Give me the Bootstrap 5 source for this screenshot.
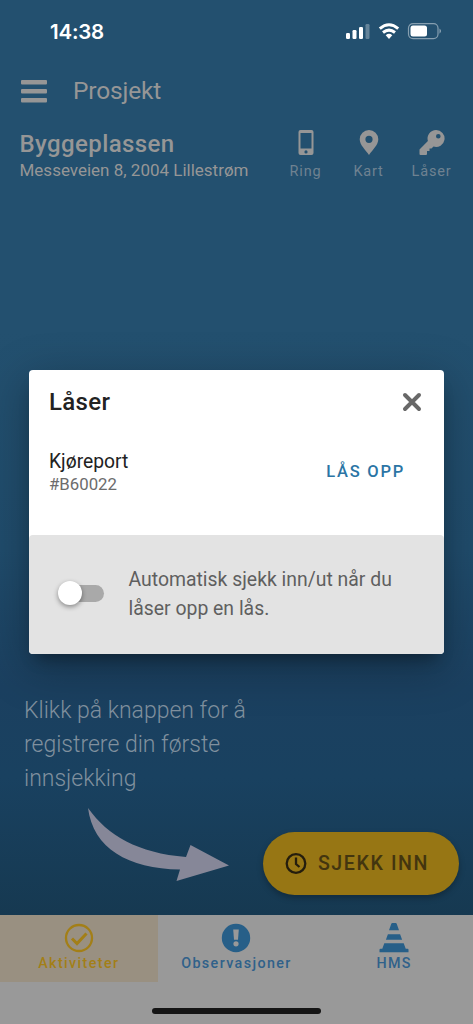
<!DOCTYPE html>
<html lang="no">
<head>
<meta charset="utf-8">
<meta name="viewport" content="width=device-width, initial-scale=1">
<title>Prosjekt</title>
<link href="https://cdn.jsdelivr.net/npm/bootstrap@5.3.0/dist/css/bootstrap.min.css" rel="stylesheet">
<style>
body{font-family:Roboto,sans-serif;background:#999;overflow:hidden}
.phone{width:473px;height:1024px}
.backdrop-page{background:linear-gradient(#23506f 0,#23506f 36%,#204c6c 60%,#1b4060 75%,#194160 85%,#163951 100%);height:915px;color:#969696}
.status{height:63px;padding:2px 32px 0 50px;color:#fff}
.clock{font:600 20.5px/1 Inter,sans-serif;letter-spacing:-.2px}
.titlebar{height:56px;padding-left:21px;gap:26px}
.titlebar span{font-size:24.5px;letter-spacing:-.15px;padding-top:1px}
.project{padding:11px 10px 0 19.5px;height:75px}
.project h1{font-size:24px;font-weight:500;line-height:28px;letter-spacing:.4px}
.project p{font-size:17px;line-height:25px;white-space:nowrap}
.quick{font-size:14.5px;letter-spacing:.8px;color:#6f8291;line-height:18px}
.quick>div{width:63px}
.quick svg{margin-bottom:6px}
.hint{font-size:23px;line-height:34px;font-weight:300;color:#80909e;margin:500px 0 0 24px;width:240px}
.action{height:106px}
.swoosh{margin:12px 0 0 86px}
.checkin{width:196px;height:63px;margin:36px 14px 0 0;background:#977614;color:#43350f;font-size:19.6px;font-weight:500;letter-spacing:1.6px;gap:11px;border:0;box-shadow:0 3px 6px #0004}
.tabs{height:67px;font-size:14.3px;font-weight:500;letter-spacing:1.4px;color:#30618a}
.tab-item{padding-top:8px;line-height:18px}
.tab-item.current{background:#999081;color:#a37f17}
.home{width:169px;height:6px;background:#151515;margin-top:26px}
.dialog{left:29px;top:370px;width:415px;height:284px;border-radius:4px;box-shadow:0 11px 15px -7px #0005,0 12px 45px 3px #0004}
.dialog-top{height:165px;padding:17px 22px 0 20px}
.dialog h2{font-size:24px;font-weight:500;line-height:30px;letter-spacing:.35px;color:#222}
.lockrow{margin-top:33px}
.lockname{font-size:19.3px;line-height:24px;color:#222}
.lockid{font-size:16.8px;line-height:21px;color:#6c6c6c}
.unlock{font-size:16.5px;font-weight:500;letter-spacing:1.75px;color:#2b75a5;padding-right:17px}
.auto{height:119px;background:#e3e3e3;border-radius:4px;padding:0 28px 2px;gap:24.5px;font-size:19.4px;line-height:29px;color:#5f5f5f}
.track{width:40px;height:17px;background:#a9a9a9;margin-left:7px}
.thumb{width:24px;height:24px;margin:-4px 0 0 -6px;background:#fff;box-shadow:0 2px 5px #0006}
</style>
</head>
<body>
<div class="phone position-relative d-flex flex-column">
<main class="backdrop-page flex-shrink-0">
<div class="status d-flex align-items-center justify-content-between">
<span class="clock">14:38</span>
<span class="d-flex align-items-center pb-1">
<svg width="96" height="18" viewBox="0 0 96 18" fill="#fff"><rect x="1" y="11" width="4" height="6" rx="1.2"/><rect x="7.500" y="8" width="4" height="9" rx="1.2"/><rect x="14" y="5" width="4" height="12" rx="1.2"/><rect x="20.500" y="2" width="4" height="15" rx="1.2" opacity=".3"/>
<g fill="none" stroke="#fff" stroke-width="3"><path d="M34.800 6.600Q44 -1.100 53.200 6.600"/><path d="M38 10.500Q44 5.700 50 10.500"/></g><path d="M40.700 13.200Q44 10.500 47.300 13.200L44 17Z"/>
<rect x="63.500" y="1.600" width="29.500" height="15" rx="4.500" fill="none" stroke="#fff" stroke-opacity=".45" stroke-width="1.200"/><rect x="65.500" y="3.600" width="16.500" height="11" rx="2.500"/><path d="M94.500 6.500q3 2.600 0 5.200z" opacity=".5"/></svg>
</span>
</div>
<div class="titlebar d-flex align-items-center">
<svg width="26" height="23" viewBox="0 0 26 23" fill="#969696"><rect width="26" height="4.500" rx="1"/><rect y="9" width="26" height="4.500" rx="1"/><rect y="18" width="26" height="4.500" rx="1"/></svg>
<span>Prosjekt</span>
</div>
<div class="project d-flex justify-content-between">
<div><h1 class="m-0">Byggeplassen</h1><p class="m-0">Messeveien 8, 2004 Lillestrøm</p></div>
<div class="quick d-flex text-center">
<div class="d-flex flex-column align-items-center"><svg width="30" height="27" viewBox="0 0 30 27" fill="#969696"><path fill-rule="evenodd" d="M9.500 0h11q2 0 2 2v21q0 2-2 2h-11q-2 0-2-2V2q0-2 2-2zM9.500 3v15.500h11V3zM15 20.300a1.600 1.600 0 1 0 0 3.200a1.600 1.600 0 1 0 0-3.200"/></svg><span>Ring</span></div>
<div class="d-flex flex-column align-items-center"><svg width="30" height="27" viewBox="0 0 30 27" fill="#969696"><path fill-rule="evenodd" d="M15 0a9.300 9.300 0 0 1 9.300 9.300C24.300 15 18.500 20 15 25C11.500 20 5.700 15 5.700 9.300A9.300 9.300 0 0 1 15 0zM15 5.700a3.600 3.600 0 1 0 0 7.200a3.600 3.600 0 1 0 0-7.200"/></svg><span>Kart</span></div>
<div class="d-flex flex-column align-items-center"><svg width="30" height="27" viewBox="0 0 30 27" fill="#969696"><path fill-rule="evenodd" d="M19 0a8.500 8.500 0 1 1-2.500 16.600L14.500 18.500H12.500V21H10V24q0 1-1 1H3.500q-1 0-1-1V19.500L10.900 11A8.500 8.500 0 0 1 19 0zM21.300 4a2.300 2.300 0 1 0 0 4.600a2.300 2.300 0 1 0 0-4.600"/></svg><span>Låser</span></div>
</div>
</div>
<p class="hint mb-0">Klikk på knappen for å registrere din første innsjekking</p>
<div class="action d-flex justify-content-between align-items-start">
<svg class="swoosh" width="146" height="76" viewBox="0 0 146 76" fill="#868798"><path d="M2 0C22 28 52 45 100 49L104.500 37L143 57.500L90.500 73L94 61.500C42 61 7 40 2 0Z"/></svg>
<button class="checkin btn rounded-pill d-flex align-items-center justify-content-center p-0 pe-2"><svg width="22" height="22" viewBox="0 0 22 22" fill="none" stroke="#241d0d" stroke-width="2.300"><circle cx="11" cy="10.500" r="9.300"/><path d="M11 4.500v6.500l3.500 3"/></svg>SJEKK INN</button>
</div>
</main>
<nav class="tabs row g-0 text-center">
<div class="tab-item current col-4 d-flex flex-column align-items-center"><svg width="30" height="31" viewBox="0 0 30 31" fill="none" stroke="#a37f17"><circle cx="15" cy="15" r="13" stroke-width="2.300"/><path d="M8 15.500l5 5L22.500 10.500" stroke-width="3"/></svg>Aktiviteter</div>
<div class="tab-item col-4 d-flex flex-column align-items-center"><svg width="30" height="31" viewBox="0 0 30 31"><circle cx="15" cy="15" r="14.200" fill="#275f88"/><path d="M12.200 6.500h5.600l-.8 10.200h-4z" fill="#999"/><circle cx="15" cy="20.800" r="2.600" fill="#999"/></svg>Observasjoner</div>
<div class="tab-item col-4 d-flex flex-column align-items-center"><svg width="30" height="31" viewBox="0 0 30 31" fill="#275f88"><path d="M13.300 0h3.400q.7 0 1 .8l2.300 6.500h-10l2.300-6.500q.3-.8 1-.8zM8.900 11.300h12.200l2 5.500H6.900zM5.300 20.300h19.400l2 5.500h1.800q1 0 1 1v2.500H.5v-2.500q0-1 1-1h1.800z"/></svg>HMS</div>
</nav>
<div class="home rounded-pill mx-auto"></div>
<section class="dialog position-absolute bg-white" role="dialog" aria-label="Låser">
<div class="dialog-top">
<div class="d-flex justify-content-between align-items-center"><h2 class="m-0">Låser</h2><svg width="20" height="20" viewBox="0 0 20 20" stroke="#686868" stroke-width="4" stroke-linecap="round"><path d="M3 3l14 14M17 3l-14 14"/></svg></div>
<div class="lockrow d-flex justify-content-between align-items-center"><div><div class="lockname">Kjøreport</div><div class="lockid">#B60022</div></div><span class="unlock">LÅS OPP</span></div>
</div>
<div class="auto d-flex align-items-center"><div class="track rounded-pill flex-shrink-0"><div class="thumb rounded-circle float-start"></div></div><div class="text-nowrap">Automatisk sjekk inn/ut når du<br>låser opp en lås.</div></div>
</section>
</div>
<script src="https://cdn.jsdelivr.net/npm/bootstrap@5.3.0/dist/js/bootstrap.bundle.min.js"></script>
</body>
</html>
